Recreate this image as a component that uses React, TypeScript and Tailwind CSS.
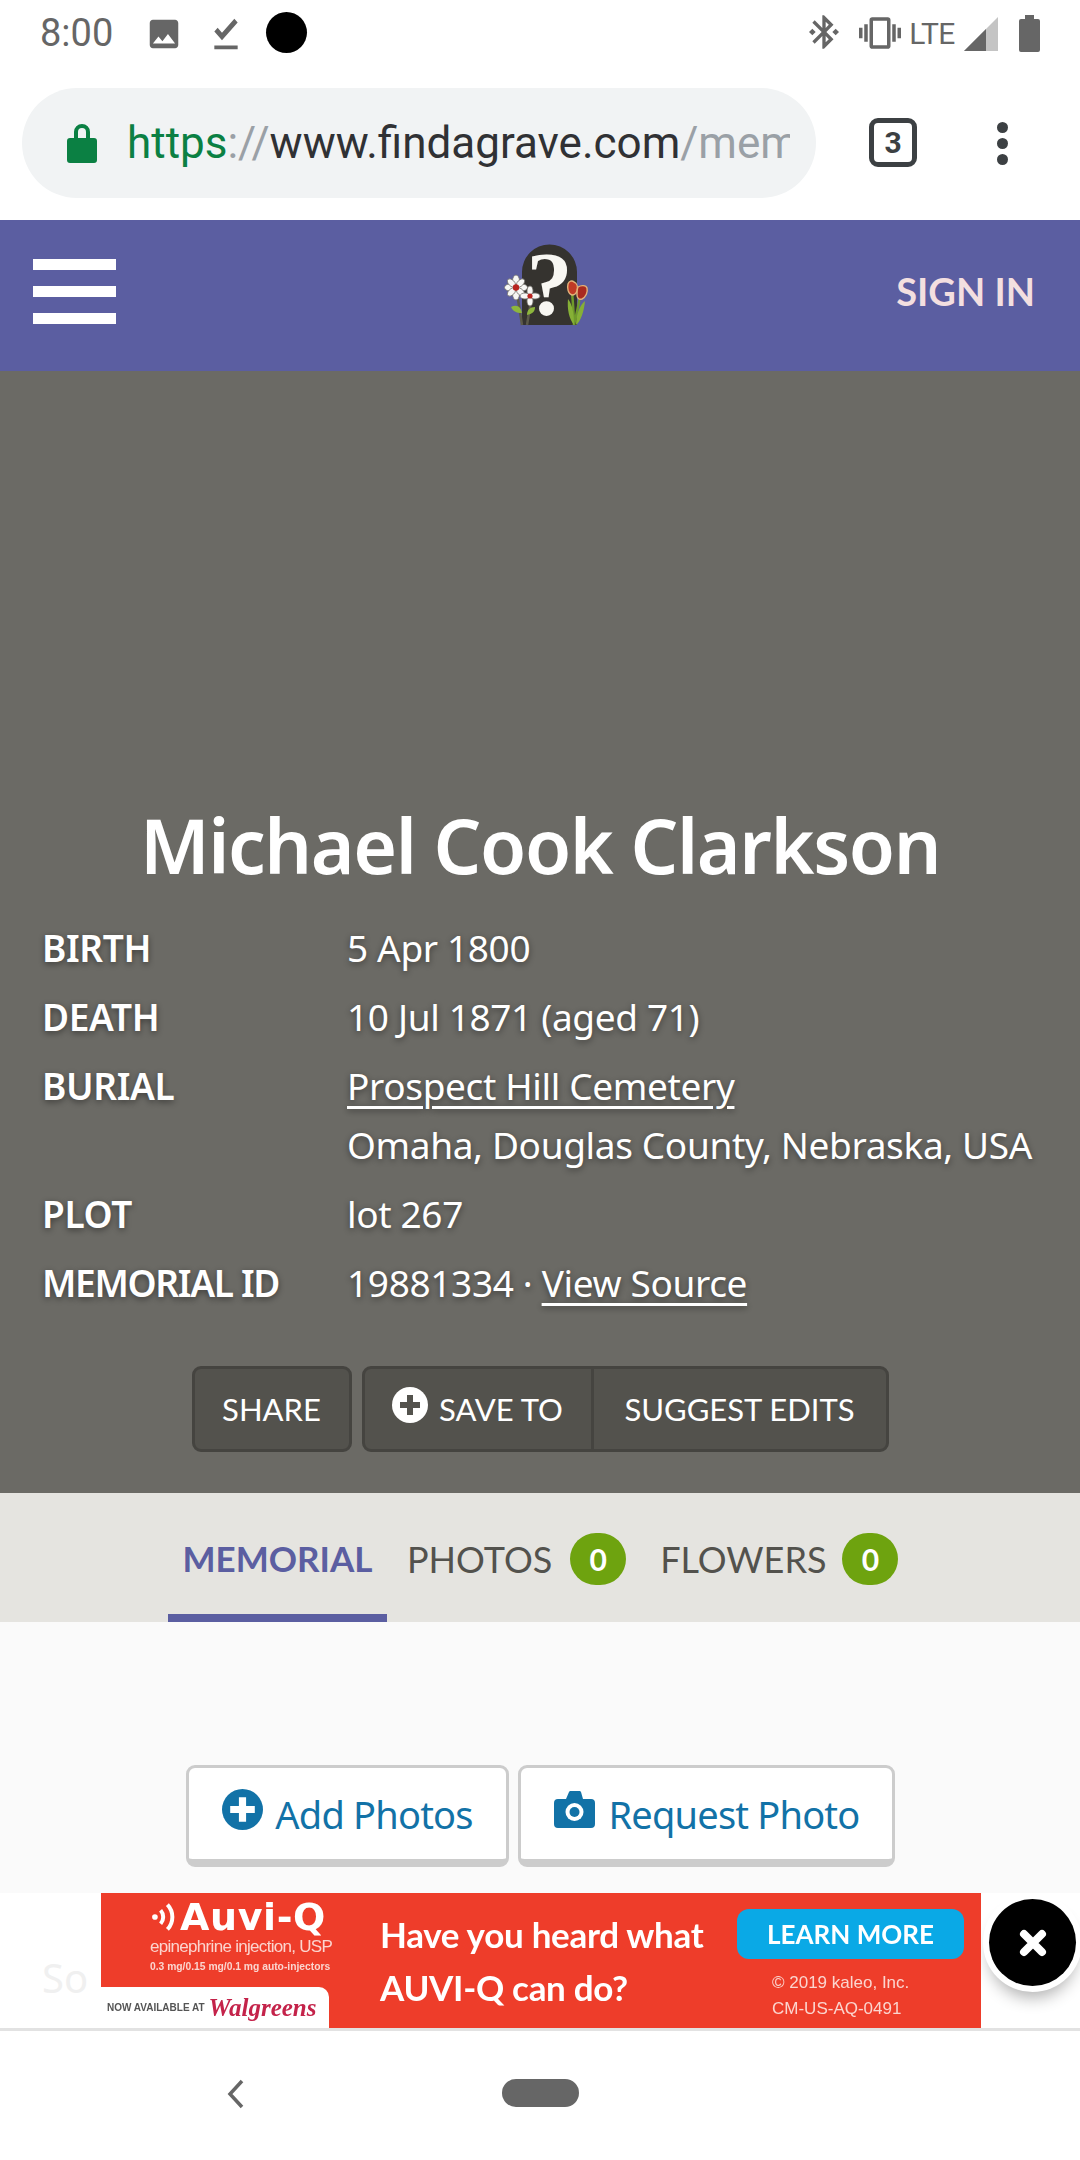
const bodyFont = "font-['Noto_Sans','Open_Sans',sans-serif]";
const navFont = "font-['Lato','Noto_Sans',sans-serif]";
const rowText = "text-[37px] leading-[59px] tracking-[-0.35px] [text-shadow:0_2px_6px_rgba(0,0,0,0.45)]";

function StatusBar() {
  return (
    <div className="flex h-[88px] items-start bg-white text-[#666666]">
      <span className="ml-[40px] mt-[11px] font-['Roboto',sans-serif] text-[38px] leading-[44px]">8:00</span>
      <svg className="ml-[32px] mt-[15px]" width="38" height="38" viewBox="0 0 24 24" fill="currentColor">
        <path d="M21 19V5c0-1.1-.9-2-2-2H5c-1.1 0-2 .9-2 2v14c0 1.1.9 2 2 2h14c1.1 0 2-.9 2-2zM8.5 13.5l2.5 3.01L14.5 12l4.5 6H5l3.5-4.5z" />
      </svg>
      <svg className="ml-[23px] mt-[11px]" width="40" height="46" viewBox="0 0 24 24" fill="currentColor" preserveAspectRatio="none">
        <path d="M5 18h14v2H5v-2zm4.6-2.7L5 10.7l2-1.9 2.6 2.6L17 4l2 2-9.4 9.3z" />
      </svg>
      <div className="ml-[20px] mt-[12px] h-[41px] w-[41px] rounded-full bg-black" />
      <svg className="ml-[497px] mt-[12px]" width="40" height="40" viewBox="0 0 24 24" fill="currentColor">
        <path d="M7 12l-2-2-2 2 2 2 2-2zm10.71-4.29L12 2h-1v7.59L6.41 5 5 6.41 10.59 12 5 17.59 6.41 19 11 14.41V22h1l5.71-5.71-4.3-4.29 4.3-4.29zM13 5.83l1.88 1.88L13 9.59V5.83zm1.88 10.46L13 18.17v-3.76l1.88 1.88zM19 10l-2 2 2 2 2-2-2-2z" />
      </svg>
      <svg className="ml-[14px] mt-[12px]" width="44" height="42" viewBox="0 0 24 24" fill="currentColor">
        <path d="M0 15h2V9H0v6zm3 2h2V7H3v10zm19-8v6h2V9h-2zm-3 8h2V7h-2v10zM16.5 3h-9C6.67 3 6 3.67 6 4.5v15c0 .83.67 1.5 1.5 1.5h9c.83 0 1.5-.67 1.5-1.5v-15c0-.83-.67-1.5-1.5-1.5zM16 19H8V5h8v14z" />
      </svg>
      <span className="ml-[7px] mt-[16px] font-['Roboto',sans-serif] text-[30px] leading-[36px] tracking-[-0.5px]">LTE</span>
      <svg className="ml-[9px] mt-[17px]" width="34" height="34" viewBox="0 0 34 34">
        <path d="M0 34 34 0v34z" fill="#c4c4c4" />
        <path d="M0 34 22 12v22z" fill="#666666" />
      </svg>
      <svg className="ml-[21px] mt-[15px]" width="21" height="37" viewBox="0 0 21 37" fill="currentColor">
        <path d="M6 0h9v4h4a2 2 0 0 1 2 2v29a2 2 0 0 1-2 2H2a2 2 0 0 1-2-2V6a2 2 0 0 1 2-2h4z" />
      </svg>
    </div>
  );
}

function UrlBar() {
  return (
    <div className="flex h-[132px] items-start bg-white">
      <div className="ml-[22px] flex h-[110px] w-[794px] items-center overflow-hidden rounded-[55px] bg-[#f1f3f4] pl-[45px] pr-[26px]">
        <svg className="shrink-0" width="30" height="40" viewBox="0 0 30 40" fill="#0b8043">
          <path d="M7 15V9a8 8 0 0 1 16 0v6h4a3 3 0 0 1 3 3v19a3 3 0 0 1-3 3H3a3 3 0 0 1-3-3V18a3 3 0 0 1 3-3zm4 0h8V9a4 4 0 0 0-8 0z" />
        </svg>
        <div className="ml-[30px] overflow-hidden whitespace-nowrap font-['Roboto',sans-serif] text-[44px] leading-[56px]">
          <span className="text-[#0b8043]">https</span>
          <span className="text-[#9aa0a6]">://</span>
          <span className="text-[#303134]">www.findagrave.com</span>
          <span className="text-[#9aa0a6]">/mem</span>
        </div>
      </div>
      <div className="ml-[53px] mt-[30px] flex h-[49px] w-[48px] items-center justify-center rounded-[9px] border-[5px] border-[#3c4043] font-['Roboto',sans-serif] text-[30px] font-bold leading-none text-[#3c4043]">
        3
      </div>
      <div className="ml-[80px] mt-[34px] flex flex-col gap-[5px]">
        <div className="h-[11px] w-[11px] rounded-full bg-[#3c4043]" />
        <div className="h-[11px] w-[11px] rounded-full bg-[#3c4043]" />
        <div className="h-[11px] w-[11px] rounded-full bg-[#3c4043]" />
      </div>
    </div>
  );
}

function Logo() {
  return (
    <svg className="ml-[364px] mt-[5px]" width="140" height="110" viewBox="0 0 140 110">
      <path d="M42 100V47a27 27 0 0 1 55 0v53z" fill="#35332f" />
      <text x="69.5" y="90" textAnchor="middle" fontFamily="'Liberation Serif', serif" fontWeight="700" fontSize="92" fill="#f8f7f2">?</text>
      <path d="M37 68 42 100M51 76 47 100" stroke="#5c5a4a" strokeWidth="2.5" fill="none" />
      <path d="M31 82c6-3 10 0 11 6-6 0-9-2-11-6zM55 82c-5 0-8 3-8 8 5-1 8-3 8-8z" fill="#8db63c" />
      <g fill="#f7f7f5" stroke="#77756f" strokeWidth="0.8">
        <ellipse cx="36" cy="56" rx="3.5" ry="6" />
        <ellipse cx="36" cy="69" rx="3.5" ry="6" />
        <ellipse cx="30" cy="62.5" rx="5.5" ry="3.5" />
        <ellipse cx="42" cy="62.5" rx="5.5" ry="3.5" />
        <ellipse cx="31.5" cy="58" rx="3" ry="5" transform="rotate(-45 31.5 58)" />
        <ellipse cx="40.5" cy="58" rx="3" ry="5" transform="rotate(45 40.5 58)" />
        <ellipse cx="31.5" cy="67" rx="3" ry="5" transform="rotate(45 31.5 67)" />
        <ellipse cx="40.5" cy="67" rx="3" ry="5" transform="rotate(-45 40.5 67)" />
        <ellipse cx="50" cy="66" rx="3" ry="5" />
        <ellipse cx="50" cy="76" rx="3" ry="5" />
        <ellipse cx="45" cy="71" rx="5" ry="3" />
        <ellipse cx="55" cy="71" rx="5" ry="3" />
      </g>
      <circle cx="36" cy="62.5" r="3.2" fill="#b8241f" />
      <circle cx="50" cy="71" r="2.6" fill="#b8241f" />
      <path d="M92 66c1 14 2 24 2 34M100 70c-1 10-4 20-6 30" stroke="#6f9a2b" strokeWidth="2.5" fill="none" />
      <path d="M88 74c5 6 6 16 6 26-5-6-7-16-6-26zM105 76c-1 10-4 20-9 24 0-9 3-19 9-24z" fill="#86b036" />
      <path d="M88 59c1-3 4-4 6-2 3 1 4 5 3 9-1 3-3 4-5 4-4-1-5-7-4-11z" fill="#c03a26" stroke="#e2b27a" strokeWidth="1.4" />
      <path d="M98 62c3-2 8-2 9 1 1 4-1 9-5 11-3 1-5-1-5-4 0-3 0-6 1-8z" fill="#a92a20" stroke="#e2b27a" strokeWidth="1.4" />
    </svg>
  );
}

function SiteHeader() {
  return (
    <div className="flex h-[151px] items-start bg-[#5b5ea1]">
      <div className="ml-[33px] mt-[39px] flex w-[83px] flex-col gap-[16px]">
        <div className="h-[11px] bg-white" />
        <div className="h-[11px] bg-white" />
        <div className="h-[11px] bg-white" />
      </div>
      <Logo />
      <span className={`ml-auto mr-[45px] mt-[45px] ${navFont} text-[38px] font-bold leading-[52px] text-[#f3dfe0]`}>SIGN IN</span>
    </div>
  );
}

function InfoRow({ label, children }: { label: React.ReactNode; children: React.ReactNode }) {
  return (
    <div className="grid grid-cols-[305px_1fr]">
      <div className={`${rowText} font-semibold`}>{label}</div>
      <div className={rowText}>{children}</div>
    </div>
  );
}

function Hero() {
  return (
    <div className={`flex h-[1122px] flex-col bg-[#6b6a65] text-white ${bodyFont}`}>
      <h1 className="mt-[424px] text-center text-[75px] font-semibold leading-[100px] tracking-[-1.4px]">Michael Cook Clarkson</h1>
      <div className="mt-[23px] flex flex-col gap-[10px] pl-[42px]">
        <InfoRow label="BIRTH">5 Apr 1800</InfoRow>
        <InfoRow label="DEATH">10 Jul 1871 (aged 71)</InfoRow>
        <InfoRow label="BURIAL">
          <a className="block underline decoration-[3px] underline-offset-[6px]">Prospect Hill Cemetery</a>
          <span className="block">Omaha, Douglas County, Nebraska, USA</span>
        </InfoRow>
        <InfoRow label="PLOT">lot 267</InfoRow>
        <InfoRow label={<span className="tracking-[-1.3px]">MEMORIAL ID</span>}>
          19881334 · <a className="underline decoration-[3px] underline-offset-[6px]">View Source</a>
        </InfoRow>
      </div>
      <div className={`mt-[54px] flex justify-center gap-[10px] ${navFont} text-[31px] text-white`}>
        <div className="flex h-[86px] w-[160px] items-center justify-center rounded-[9px] border-[3px] border-[#454440] bg-[#53524d]">SHARE</div>
        <div className="flex h-[86px] w-[527px] rounded-[9px] border-[3px] border-[#454440] bg-[#53524d]">
          <div className="flex w-[229px] items-center justify-center gap-[11px] border-r-[3px] border-[#454440]">
            <svg className="mb-[8px]" width="36" height="36" viewBox="0 0 36 36">
              <circle cx="18" cy="18" r="18" fill="#ffffff" />
              <path d="M15 8h6v7h7v6h-7v7h-6v-7H8v-6h7z" fill="#53524d" />
            </svg>
            <span>SAVE TO</span>
          </div>
          <div className="flex flex-1 items-center justify-center">SUGGEST EDITS</div>
        </div>
      </div>
    </div>
  );
}

function CountBadge() {
  return (
    <span className={`mt-[1px] flex h-[52px] w-[56px] items-center justify-center rounded-full bg-[#6ea30f] ${navFont} text-[30px] font-bold text-white`}>0</span>
  );
}

function Tabs() {
  return (
    <div className={`flex h-[129px] items-stretch bg-[#e5e4e0] pl-[168px] pt-[2px] ${navFont} text-[36px]`}>
      <div className="flex w-[219px] items-center justify-center border-b-[8px] border-[#5b5ea1] pt-[8px] text-[35px] font-bold text-[#5b5ea1]">MEMORIAL</div>
      <div className="ml-[20px] flex items-center text-[#53524d]">
        PHOTOS
        <span className="ml-[18px]"><CountBadge /></span>
      </div>
      <div className="ml-[34px] flex items-center text-[#53524d]">
        FLOWERS
        <span className="ml-[16px]"><CountBadge /></span>
      </div>
    </div>
  );
}

function ActionButtons() {
  const btn = "flex h-[102px] items-center justify-center rounded-[9px] border-[3px] border-b-[8px] border-[#cccccc] bg-white pt-[1px]";
  return (
    <div className={`flex h-[271px] justify-center gap-[9px] bg-[#fafafa] pt-[143px] pl-[1px] ${bodyFont} text-[38px] tracking-[-0.8px] text-[#1272a7]`}>
      <div className={`${btn} w-[323px] gap-[12px]`}>
        <svg className="mb-[10px]" width="41" height="41" viewBox="0 0 40 40">
          <circle cx="20" cy="20" r="20" fill="#1272a7" />
          <path d="M16.5 8h7v8.5H32v7h-8.5V32h-7v-8.5H8v-7h8.5z" fill="#ffffff" />
        </svg>
        <span>Add Photos</span>
      </div>
      <div className={`${btn} w-[377px] gap-[14px]`}>
        <svg className="mb-[10px]" width="41" height="37" viewBox="0 0 41 37">
          <path d="M4 8h8l3-7a2 2 0 0 1 2-1h8a2 2 0 0 1 2 1l2 7h8a4 4 0 0 1 4 4v21a4 4 0 0 1-4 4H4a4 4 0 0 1-4-4V12a4 4 0 0 1 4-4z" fill="#1272a7" />
          <circle cx="20.5" cy="21" r="9" fill="#ffffff" />
          <circle cx="20.5" cy="21" r="5" fill="#1272a7" />
        </svg>
        <span>Request Photo</span>
      </div>
    </div>
  );
}

function AdBanner() {
  return (
    <div className="flex h-[135px] bg-white">
      <div className={`w-[101px] overflow-hidden whitespace-nowrap pl-[42px] pt-[57px] ${bodyFont} text-[40px] leading-[56px] text-[#f0f0f0]`}>So</div>
      <div className="flex w-[880px] bg-[#ee3d2a] text-white blur-[0.6px]">
        <div className="flex w-[279px] flex-col">
          <div className="pl-[49px] pt-[5px]">
            <div className="flex items-center font-['DejaVu_Sans',sans-serif] text-[38px] font-bold leading-[38px] tracking-[0.6px]">
              <svg className="mr-[2px] shrink-0" width="28" height="34" viewBox="0 0 24 30" fill="none" stroke="#ffffff" strokeWidth="3.5">
                <circle cx="4" cy="15" r="2.5" fill="#ffffff" stroke="none" />
                <path d="M9 9a9 9 0 0 1 0 12M15 4a16 16 0 0 1 0 22" />
              </svg>
              Auvi-Q
            </div>
            <div className="whitespace-nowrap font-['Liberation_Sans',sans-serif] text-[17px] leading-[22px] tracking-[-0.7px] text-[#fbd5cf]">epinephrine injection, USP</div>
            <div className="whitespace-nowrap font-['Liberation_Sans',sans-serif] text-[10.3px] font-bold leading-[18px] text-[#fbd5cf]">0.3 mg/0.15 mg/0.1 mg auto-injectors</div>
          </div>
          <div className="mt-auto flex h-[41px] w-[228px] items-center whitespace-nowrap rounded-tr-[10px] bg-white pl-[6px]">
            <span className="font-['Liberation_Sans',sans-serif] text-[10px] font-bold text-[#555555]">NOW AVAILABLE AT</span>
            <span className="ml-[4px] font-['Liberation_Serif',serif] text-[25px] font-bold italic leading-none text-[#c4234a]">Walgreens</span>
          </div>
        </div>
        <div className="flex w-[357px] flex-col pt-[15px] font-['Lato',sans-serif] text-[35px] font-bold leading-[53px] tracking-[-0.3px]">
          <span className="whitespace-nowrap">Have you heard what</span>
          <span className="whitespace-nowrap">AUVI-Q can do?</span>
        </div>
        <div className="flex flex-col pt-[16px]">
          <div className="flex h-[50px] w-[227px] items-center justify-center rounded-[12px] bg-[#0aa9e6] font-['Lato',sans-serif] text-[26px] font-bold">LEARN MORE</div>
          <div className="mt-[11px] pl-[35px] font-['Liberation_Sans',sans-serif] text-[17px] leading-[26px] text-[#fbd5cf]">
            <div>© 2019 kaleo, Inc.</div>
            <div>CM-US-AQ-0491</div>
          </div>
        </div>
      </div>
      <div className="ml-[8px] mt-[6px] flex h-[87px] w-[87px] items-center justify-center self-start rounded-full bg-black ring-[6px] ring-white shadow-[0_12px_16px_rgba(0,0,0,0.3)]">
        <svg width="30" height="30" viewBox="0 0 30 30" stroke="#ffffff" strokeWidth="8" strokeLinecap="round">
          <path d="M6 6 24 24M24 6 6 24" />
        </svg>
      </div>
    </div>
  );
}

function NavBar() {
  return (
    <div className="flex h-[132px] items-start border-t-[3px] border-[#e2e2e2] bg-white">
      <svg className="ml-[225px] mt-[48px]" width="20" height="30" viewBox="0 0 20 30" fill="none" stroke="#666666" strokeWidth="3.5">
        <path d="M17 2 5 15l12 13" />
      </svg>
      <div className="ml-[257px] mt-[48px] h-[28px] w-[77px] rounded-[14px] bg-[#666666]" />
    </div>
  );
}

export default function App() {
  return (
    <div className="flex h-[2160px] w-[1080px] flex-col overflow-hidden bg-white">
      <StatusBar />
      <UrlBar />
      <SiteHeader />
      <Hero />
      <Tabs />
      <ActionButtons />
      <AdBanner />
      <NavBar />
    </div>
  );
}
